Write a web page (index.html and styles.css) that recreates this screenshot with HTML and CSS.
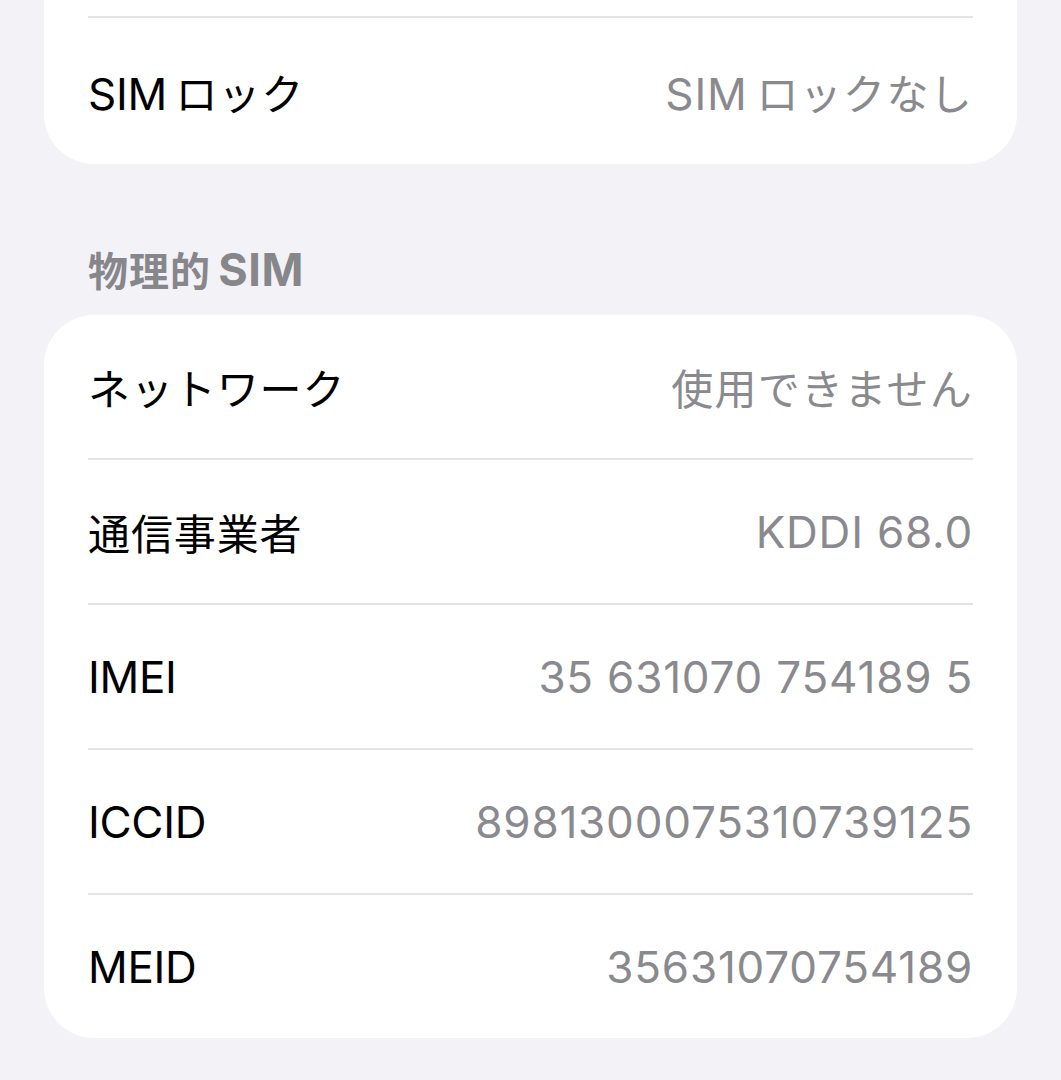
FILE: index.html
```html
<!DOCTYPE html>
<html lang="ja">
<head>
<meta charset="utf-8">
<link rel="stylesheet" href="styles.css">
</head>
<body>
<div class="page">
  <div class="card card-top">
    <div class="top-spacer"></div>
    <div class="row"><span class="label"><span class="lat">SIM</span>&#8201;ロック</span><span class="value"><span class="lat">SIM</span>&#8201;ロックなし</span></div>
  </div>
  <div class="section-title">物理的&#8201;<span class="lat">SIM</span></div>
  <div class="card">
    <div class="row"><span class="label">ネットワーク</span><span class="value">使用できません</span></div>
    <div class="row"><span class="label">通信事業者</span><span class="value"><span class="lat">KDDI 68.0</span></span></div>
    <div class="row"><span class="label"><span class="lat">IMEI</span></span><span class="value"><span class="lat">35 631070 754189 5</span></span></div>
    <div class="row"><span class="label"><span class="lat">ICCID</span></span><span class="value"><span class="lat">8981300075310739125</span></span></div>
    <div class="row"><span class="label"><span class="lat">MEID</span></span><span class="value"><span class="lat">35631070754189</span></span></div>
  </div>
</div>
</body>
</html>
```
FILE: styles.css
```css
html, body {
  margin: 0;
  padding: 0;
  background: #f2f2f7;
}
body {
  font-family: "Inter", "Noto Sans CJK JP", sans-serif;
  -webkit-font-smoothing: antialiased;
}
.page {
  padding: 0 44px;
}
.card {
  background: #ffffff;
  border-radius: 50px;
  padding: 0 44px;
}
.card-top {
  border-top-left-radius: 0;
  border-top-right-radius: 0;
}
.top-spacer {
  height: 16px;
}
.row {
  display: flex;
  align-items: center;
  justify-content: space-between;
  height: 143px;
  border-top: 2px solid #e3e3e6;
  font-size: 42px;
  letter-spacing: 0.9px;
}
.card > .row:first-child {
  border-top: none;
}
.card-top .row {
  height: 146px;
}
.label {
  color: #000000;
}
.value {
  color: #8a8a8e;
  letter-spacing: 1.3px;
}
.lat {
  font-size: 44px;
  letter-spacing: 0;
}
.value .lat {
  letter-spacing: 0.8px;
}
.label .lat {
  letter-spacing: -0.3px;
}
.section-title {
  font-size: 40px;
  font-weight: 700;
  color: #86868b;
  padding: 85px 0 0 44px;
  height: 66px;
  line-height: 42px;
  letter-spacing: 1px;
}
.section-title .lat {
  font-size: 45px;
  letter-spacing: 0.5px;
}
```
